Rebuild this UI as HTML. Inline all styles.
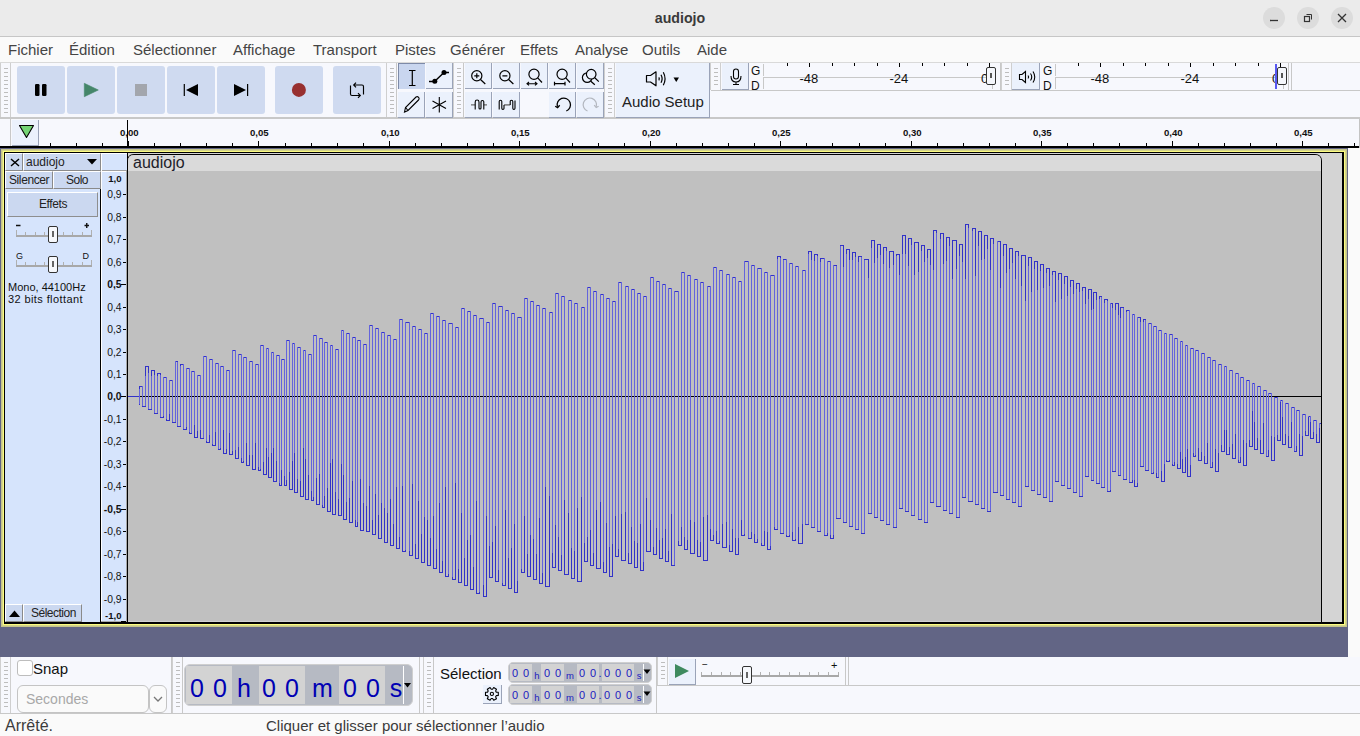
<!DOCTYPE html><html><head><meta charset="utf-8"><style>
*{margin:0;padding:0;box-sizing:border-box}
html,body{width:1360px;height:736px;overflow:hidden;background:#fafafa;font-family:"Liberation Sans",sans-serif}
div{position:absolute}
.t{white-space:nowrap}
svg{position:absolute;overflow:visible}
</style></head><body>
<div style="left:0px;top:0px;width:1360px;height:36px;background:#ebebeb"></div>
<div style="left:0px;top:36px;width:1360px;height:1px;background:#c6c6c6"></div>
<div class="t" style="left:0;top:10px;width:1360px;text-align:center;font-size:14.2px;line-height:16px;font-weight:bold;color:#3a3a3a">audiojo</div>
<div style="left:1263px;top:7px;width:22px;height:22px;background:#dcdcdc;border-radius:50%"></div>
<div style="left:1297px;top:7px;width:22px;height:22px;background:#dcdcdc;border-radius:50%"></div>
<div style="left:1331px;top:7px;width:22px;height:22px;background:#dcdcdc;border-radius:50%"></div>
<svg style="left:0;top:0" width="1360" height="36"><line x1="1270" y1="20.5" x2="1278" y2="20.5" stroke="#333" stroke-width="1.3"/><rect x="1304.5" y="16.5" width="5" height="5" fill="none" stroke="#333" stroke-width="1.2"/><polyline points="1306.5,14.5 1311.5,14.5 1311.5,19.5" fill="none" stroke="#333" stroke-width="1"/><path d="M1338 14 L1346 22 M1346 14 L1338 22" stroke="#333" stroke-width="1.3"/></svg>
<div style="left:0px;top:37px;width:1360px;height:25px;background:#fafafa"></div>
<div style="left:0px;top:62px;width:1360px;height:1px;background:#d9d9d9"></div>
<div class="t" style="left:8px;top:42px;font-size:15px;line-height:15px;color:#444;font-weight:normal;">Fichier</div>
<div class="t" style="left:69px;top:42px;font-size:15px;line-height:15px;color:#444;font-weight:normal;">Édition</div>
<div class="t" style="left:133px;top:42px;font-size:15px;line-height:15px;color:#444;font-weight:normal;">Sélectionner</div>
<div class="t" style="left:233px;top:42px;font-size:15px;line-height:15px;color:#444;font-weight:normal;">Affichage</div>
<div class="t" style="left:313px;top:42px;font-size:15px;line-height:15px;color:#444;font-weight:normal;">Transport</div>
<div class="t" style="left:395px;top:42px;font-size:15px;line-height:15px;color:#444;font-weight:normal;">Pistes</div>
<div class="t" style="left:450px;top:42px;font-size:15px;line-height:15px;color:#444;font-weight:normal;">Générer</div>
<div class="t" style="left:520px;top:42px;font-size:15px;line-height:15px;color:#444;font-weight:normal;">Effets</div>
<div class="t" style="left:575px;top:42px;font-size:15px;line-height:15px;color:#444;font-weight:normal;">Analyse</div>
<div class="t" style="left:642px;top:42px;font-size:15px;line-height:15px;color:#444;font-weight:normal;">Outils</div>
<div class="t" style="left:697px;top:42px;font-size:15px;line-height:15px;color:#444;font-weight:normal;">Aide</div>
<div style="left:0px;top:63px;width:1360px;height:55px;background:#f7f8fd"></div>
<div style="left:0px;top:117px;width:1360px;height:2px;background:#c8c8c8"></div>
<div style="left:0px;top:63px;width:1px;height:54px;background:#cfcfcf"></div>
<div style="left:10px;top:63px;width:1px;height:54px;background:#cfcfcf"></div>
<div style="left:4px;top:68px;width:4px;height:1px;background:#bdbdbd"></div>
<div style="left:4px;top:72px;width:4px;height:1px;background:#bdbdbd"></div>
<div style="left:4px;top:76px;width:4px;height:1px;background:#bdbdbd"></div>
<div style="left:4px;top:80px;width:4px;height:1px;background:#bdbdbd"></div>
<div style="left:4px;top:84px;width:4px;height:1px;background:#bdbdbd"></div>
<div style="left:4px;top:88px;width:4px;height:1px;background:#bdbdbd"></div>
<div style="left:4px;top:92px;width:4px;height:1px;background:#bdbdbd"></div>
<div style="left:4px;top:96px;width:4px;height:1px;background:#bdbdbd"></div>
<div style="left:4px;top:100px;width:4px;height:1px;background:#bdbdbd"></div>
<div style="left:4px;top:104px;width:4px;height:1px;background:#bdbdbd"></div>
<div style="left:4px;top:108px;width:4px;height:1px;background:#bdbdbd"></div>
<div style="left:4px;top:112px;width:4px;height:1px;background:#bdbdbd"></div>
<div style="left:17px;top:66px;width:48px;height:48px;background:#cfdaf0;border-radius:3px"></div>
<div style="left:67px;top:66px;width:48px;height:48px;background:#cfdaf0;border-radius:3px"></div>
<div style="left:117px;top:66px;width:48px;height:48px;background:#cfdaf0;border-radius:3px"></div>
<div style="left:167px;top:66px;width:48px;height:48px;background:#cfdaf0;border-radius:3px"></div>
<div style="left:217px;top:66px;width:48px;height:48px;background:#cfdaf0;border-radius:3px"></div>
<div style="left:275px;top:66px;width:48px;height:48px;background:#cfdaf0;border-radius:3px"></div>
<div style="left:333px;top:66px;width:48px;height:48px;background:#cfdaf0;border-radius:3px"></div>
<svg style="left:0;top:0" width="400" height="120"><rect x="35" y="84" width="4.5" height="12" rx="1.2" fill="#000"/><rect x="42" y="84" width="4.5" height="12" rx="1.2" fill="#000"/><path d="M84.3 83.3 L98.3 90 L84.3 96.7 Z" fill="#45866a" stroke="#45866a" stroke-width="0.6" stroke-linejoin="round"/><rect x="135" y="84" width="12" height="12" fill="#a3a6ad"/><rect x="183.7" y="84" width="1.2" height="12" fill="#000"/><path d="M186 90 L198 84 L198 96 Z" fill="#000"/><path d="M234 84 L246 90 L234 96 Z" fill="#000"/><rect x="247" y="84" width="1.2" height="12" fill="#000"/><circle cx="298.9" cy="89.9" r="7" fill="#983030"/><path d="M350.5 85.5 V94 Q350.5 95.5 352 95.5 H360.3 M358 93.2 L360.3 95.5 L358 97.8" fill="none" stroke="#000" stroke-width="1.15"/><path d="M363.5 94.5 V86.5 Q363.5 85 362 85 H353.7 M356 82.7 L353.7 85 L356 87.3" fill="none" stroke="#000" stroke-width="1.15"/></svg>
<div style="left:386px;top:63px;width:1px;height:54px;background:#c8c8c8"></div>
<div style="left:386px;top:63px;width:1px;height:54px;background:#cfcfcf"></div>
<div style="left:396px;top:63px;width:1px;height:54px;background:#cfcfcf"></div>
<div style="left:390px;top:68px;width:4px;height:1px;background:#bdbdbd"></div>
<div style="left:390px;top:72px;width:4px;height:1px;background:#bdbdbd"></div>
<div style="left:390px;top:76px;width:4px;height:1px;background:#bdbdbd"></div>
<div style="left:390px;top:80px;width:4px;height:1px;background:#bdbdbd"></div>
<div style="left:390px;top:84px;width:4px;height:1px;background:#bdbdbd"></div>
<div style="left:390px;top:88px;width:4px;height:1px;background:#bdbdbd"></div>
<div style="left:390px;top:92px;width:4px;height:1px;background:#bdbdbd"></div>
<div style="left:390px;top:96px;width:4px;height:1px;background:#bdbdbd"></div>
<div style="left:390px;top:100px;width:4px;height:1px;background:#bdbdbd"></div>
<div style="left:390px;top:104px;width:4px;height:1px;background:#bdbdbd"></div>
<div style="left:390px;top:108px;width:4px;height:1px;background:#bdbdbd"></div>
<div style="left:390px;top:112px;width:4px;height:1px;background:#bdbdbd"></div>
<div style="left:396px;top:63px;width:1px;height:54px;background:#c8c8c8"></div>
<div style="left:398px;top:63px;width:27px;height:26px;background:#c9d6ef;border-top:1px solid #7d8aa8;border-left:1px solid #7d8aa8"></div>
<div style="left:426px;top:63px;width:27px;height:26px;background:#ebf1fc;border-bottom:1px solid #9aa3b8;border-right:1px solid #9aa3b8"></div>
<div style="left:398px;top:92px;width:27px;height:26px;background:#ebf1fc;border-bottom:1px solid #9aa3b8;border-right:1px solid #9aa3b8"></div>
<div style="left:426px;top:92px;width:27px;height:26px;background:#ebf1fc;border-bottom:1px solid #9aa3b8;border-right:1px solid #9aa3b8"></div>
<div style="left:453px;top:63px;width:1px;height:54px;background:#c8c8c8"></div>
<div style="left:453px;top:63px;width:1px;height:54px;background:#cfcfcf"></div>
<div style="left:463px;top:63px;width:1px;height:54px;background:#cfcfcf"></div>
<div style="left:457px;top:68px;width:4px;height:1px;background:#bdbdbd"></div>
<div style="left:457px;top:72px;width:4px;height:1px;background:#bdbdbd"></div>
<div style="left:457px;top:76px;width:4px;height:1px;background:#bdbdbd"></div>
<div style="left:457px;top:80px;width:4px;height:1px;background:#bdbdbd"></div>
<div style="left:457px;top:84px;width:4px;height:1px;background:#bdbdbd"></div>
<div style="left:457px;top:88px;width:4px;height:1px;background:#bdbdbd"></div>
<div style="left:457px;top:92px;width:4px;height:1px;background:#bdbdbd"></div>
<div style="left:457px;top:96px;width:4px;height:1px;background:#bdbdbd"></div>
<div style="left:457px;top:100px;width:4px;height:1px;background:#bdbdbd"></div>
<div style="left:457px;top:104px;width:4px;height:1px;background:#bdbdbd"></div>
<div style="left:457px;top:108px;width:4px;height:1px;background:#bdbdbd"></div>
<div style="left:457px;top:112px;width:4px;height:1px;background:#bdbdbd"></div>
<div style="left:463px;top:63px;width:1px;height:54px;background:#c8c8c8"></div>
<div style="left:465px;top:63px;width:27px;height:26px;background:#ebf1fc;border-bottom:1px solid #9aa3b8;border-right:1px solid #9aa3b8"></div>
<div style="left:493px;top:63px;width:27px;height:26px;background:#ebf1fc;border-bottom:1px solid #9aa3b8;border-right:1px solid #9aa3b8"></div>
<div style="left:521px;top:63px;width:27px;height:26px;background:#ebf1fc;border-bottom:1px solid #9aa3b8;border-right:1px solid #9aa3b8"></div>
<div style="left:549px;top:63px;width:27px;height:26px;background:#ebf1fc;border-bottom:1px solid #9aa3b8;border-right:1px solid #9aa3b8"></div>
<div style="left:577px;top:63px;width:27px;height:26px;background:#ebf1fc;border-bottom:1px solid #9aa3b8;border-right:1px solid #9aa3b8"></div>
<div style="left:465px;top:92px;width:27px;height:26px;background:#ebf1fc;border-bottom:1px solid #9aa3b8;border-right:1px solid #9aa3b8"></div>
<div style="left:493px;top:92px;width:27px;height:26px;background:#ebf1fc;border-bottom:1px solid #9aa3b8;border-right:1px solid #9aa3b8"></div>
<div style="left:549px;top:92px;width:27px;height:26px;background:#ebf1fc;border-bottom:1px solid #9aa3b8;border-right:1px solid #9aa3b8"></div>
<div style="left:577px;top:92px;width:27px;height:26px;background:#ebf1fc;border-bottom:1px solid #9aa3b8;border-right:1px solid #9aa3b8"></div>
<div style="left:604px;top:63px;width:1px;height:54px;background:#c8c8c8"></div>
<div style="left:604px;top:63px;width:1px;height:54px;background:#cfcfcf"></div>
<div style="left:614px;top:63px;width:1px;height:54px;background:#cfcfcf"></div>
<div style="left:608px;top:68px;width:4px;height:1px;background:#bdbdbd"></div>
<div style="left:608px;top:72px;width:4px;height:1px;background:#bdbdbd"></div>
<div style="left:608px;top:76px;width:4px;height:1px;background:#bdbdbd"></div>
<div style="left:608px;top:80px;width:4px;height:1px;background:#bdbdbd"></div>
<div style="left:608px;top:84px;width:4px;height:1px;background:#bdbdbd"></div>
<div style="left:608px;top:88px;width:4px;height:1px;background:#bdbdbd"></div>
<div style="left:608px;top:92px;width:4px;height:1px;background:#bdbdbd"></div>
<div style="left:608px;top:96px;width:4px;height:1px;background:#bdbdbd"></div>
<div style="left:608px;top:100px;width:4px;height:1px;background:#bdbdbd"></div>
<div style="left:608px;top:104px;width:4px;height:1px;background:#bdbdbd"></div>
<div style="left:608px;top:108px;width:4px;height:1px;background:#bdbdbd"></div>
<div style="left:608px;top:112px;width:4px;height:1px;background:#bdbdbd"></div>
<div style="left:616px;top:63px;width:94px;height:55px;background:#ebf1fc;border-bottom:1px solid #9aa3b8;border-right:1px solid #9aa3b8"></div>
<div class="t" style="left:622px;top:94px;font-size:15px;line-height:15px;color:#222;font-weight:normal;">Audio Setup</div>
<svg style="left:0;top:0" width="720" height="120"><path d="M409 70.5 H415.5 M412.3 70.5 V85.5 M409 85.5 H415.5" stroke="#000" stroke-width="1.2" fill="none"/><path d="M429 81.5 H434.5 L444 72.5 H449" stroke="#000" stroke-width="1.35" fill="none"/><circle cx="434.8" cy="81.3" r="2.5" fill="#000"/><circle cx="444" cy="72.4" r="2.5" fill="#000"/><path d="M404.5 112 L405.5 107.5 L416 97 Q418 96 419 98 Q419.5 99 418.5 100 L408 110.5 Z M405.5 107.5 L408 110.5" stroke="#000" stroke-width="1.1" fill="none"/><path d="M439.3 97 V112.5 M432.5 101 L446 108.5 M432.5 108.5 L446 101" stroke="#000" stroke-width="1.1" fill="none"/><circle cx="476.8" cy="75.8" r="5.1" stroke="#000" stroke-width="1.2" fill="none"/><path d="M480.5 79.5 L485.3 84 M474.3 75.8 H479.3 M476.8 73.3 V78.3" stroke="#000" stroke-width="1.2"/><circle cx="504.9" cy="75.8" r="5.1" stroke="#000" stroke-width="1.2" fill="none"/><path d="M508.6 79.5 L513.4 84 M502.4 75.8 H507.4" stroke="#000" stroke-width="1.2"/><circle cx="534" cy="74.2" r="5.1" stroke="#000" stroke-width="1.2" fill="none"/><path d="M537.7 77.9 L542 82.5" stroke="#000" stroke-width="1.2"/><path d="M527 83.7 H537 M529 82 L527 83.7 L529 85.4 M535 82 L537 83.7 L535 85.4" stroke="#000" stroke-width="1.1" fill="none"/><circle cx="562.1" cy="74.2" r="5.1" stroke="#000" stroke-width="1.2" fill="none"/><path d="M565.8 77.9 L570 82.5" stroke="#000" stroke-width="1.2"/><path d="M554.5 83.7 H565 M554.5 81.8 V85.6 M565 81.8 V85.6" stroke="#000" stroke-width="1.2" fill="none"/><circle cx="587.2" cy="77.6" r="4.8" stroke="#000" stroke-width="1.2" fill="none"/><circle cx="591.2" cy="74.2" r="4.8" stroke="#000" stroke-width="1.2" fill="#ebf1fc"/><path d="M590.8 81.2 L594.8 84.8 M594.8 77.8 L598.8 81.6" stroke="#000" stroke-width="1.2"/><path d="M471 104.9 H475.2 M483.8 104.9 H487" stroke="#6e6e6e" stroke-width="1.4"/><path d="M475.2 109.6 V101.9 A1.9 1.9 0 0 1 479 101.9 V108 A1 1 0 0 0 481 108 V101.9 A1.4 1.4 0 0 1 483.8 101.9 V109.6" stroke="#000" stroke-width="1.1" fill="none"/><path d="M504 104.9 H510.2" stroke="#6e6e6e" stroke-width="1.4"/><path d="M499.2 109.6 V101.6 A1.3 1.3 0 0 1 501.8 101.6 V108.3 A1.1 1.1 0 0 0 504 108.3 V104.9 M510.2 104.9 V101.6 A1.3 1.3 0 0 1 512.8 101.6 V108.3 A1.1 1.1 0 0 0 515 108.3 V100.5" stroke="#000" stroke-width="1.1" fill="none"/><path d="M566.3 111 A6.7 6.7 0 1 0 557.4 106.8" stroke="#000" stroke-width="1.3" fill="none"/><path d="M555.2 106.2 L557.6 107.6 L559.7 105.2" stroke="#000" stroke-width="1.3" fill="none"/><path d="M587.5 111 A6.7 6.7 0 1 1 596.2 106.8" stroke="#b3b7bf" stroke-width="1.2" fill="none"/><path d="M594.2 105.2 L596.2 107.6 L598.6 106.2" stroke="#b3b7bf" stroke-width="1.2" fill="none"/><path d="M646.5 75.5 H650.5 L656 71.8 V85.8 L650.5 82 H646.5 Z" stroke="#000" stroke-width="1.2" fill="none" stroke-linejoin="round"/><path d="M658.8 77.3 Q659.8 78.8 658.8 80.3 M661 74.8 Q663.2 78.8 661 82.8 M663.3 72.3 Q666.8 78.8 663.3 85.3" stroke="#000" stroke-width="1.2" fill="none"/><path d="M673.5 77.5 H679 L676.25 82 Z" fill="#000"/></svg>
<div style="left:710px;top:63px;width:1px;height:27px;background:#c8c8c8"></div>
<div style="left:711px;top:90px;width:649px;height:1px;background:#c8c8c8"></div>
<div style="left:710px;top:63px;width:1px;height:27px;background:#cfcfcf"></div>
<div style="left:720px;top:63px;width:1px;height:27px;background:#cfcfcf"></div>
<div style="left:714px;top:68px;width:4px;height:1px;background:#bdbdbd"></div>
<div style="left:714px;top:72px;width:4px;height:1px;background:#bdbdbd"></div>
<div style="left:714px;top:76px;width:4px;height:1px;background:#bdbdbd"></div>
<div style="left:714px;top:80px;width:4px;height:1px;background:#bdbdbd"></div>
<div style="left:714px;top:84px;width:4px;height:1px;background:#bdbdbd"></div>
<div style="left:722px;top:63px;width:27px;height:27px;background:#ebf1fc;border-bottom:1px solid #9aa3b8;border-right:1px solid #9aa3b8"></div>
<div style="left:1000px;top:63px;width:1px;height:27px;background:#c8c8c8"></div>
<div style="left:1001px;top:63px;width:1px;height:27px;background:#cfcfcf"></div>
<div style="left:1011px;top:63px;width:1px;height:27px;background:#cfcfcf"></div>
<div style="left:1005px;top:68px;width:4px;height:1px;background:#bdbdbd"></div>
<div style="left:1005px;top:72px;width:4px;height:1px;background:#bdbdbd"></div>
<div style="left:1005px;top:76px;width:4px;height:1px;background:#bdbdbd"></div>
<div style="left:1005px;top:80px;width:4px;height:1px;background:#bdbdbd"></div>
<div style="left:1005px;top:84px;width:4px;height:1px;background:#bdbdbd"></div>
<div style="left:1012px;top:63px;width:28px;height:27px;background:#ebf1fc;border-bottom:1px solid #9aa3b8;border-right:1px solid #9aa3b8"></div>
<div style="left:1288px;top:63px;width:1px;height:27px;background:#c8c8c8"></div>
<div style="left:1291px;top:63px;width:1px;height:27px;background:#c8c8c8"></div>
<div class="t" style="left:751px;top:65px;font-size:12px;line-height:12px;color:#111;font-weight:normal;">G</div>
<div class="t" style="left:751px;top:79.5px;font-size:12px;line-height:12px;color:#111;font-weight:normal;">D</div>
<div style="left:763px;top:64px;width:1px;height:12px;background:#c8c8c8"></div>
<div style="left:763px;top:78px;width:1px;height:11px;background:#c8c8c8"></div>
<div style="left:763px;top:77px;width:232px;height:1px;background:#c8c8c8"></div>
<div style="left:787px;top:63px;width:1px;height:3px;background:#000"></div>
<div style="left:809px;top:63px;width:1px;height:4px;background:#000"></div>
<div style="left:832px;top:63px;width:1px;height:3px;background:#000"></div>
<div style="left:854px;top:63px;width:1px;height:3px;background:#000"></div>
<div style="left:877px;top:63px;width:1px;height:3px;background:#000"></div>
<div style="left:899px;top:63px;width:1px;height:4px;background:#000"></div>
<div style="left:922px;top:63px;width:1px;height:3px;background:#000"></div>
<div style="left:944px;top:63px;width:1px;height:3px;background:#000"></div>
<div style="left:967px;top:63px;width:1px;height:3px;background:#000"></div>
<div style="left:989px;top:63px;width:1px;height:4px;background:#000"></div>
<div class="t" style="left:799.5px;top:71.5px;font-size:13px;line-height:13px;color:#111;font-weight:normal;">-48</div>
<div class="t" style="left:889.5px;top:71.5px;font-size:13px;line-height:13px;color:#111;font-weight:normal;">-24</div>
<div class="t" style="left:981px;top:71.5px;font-size:13px;line-height:13px;color:#111;font-weight:normal;">0</div>
<div style="left:986px;top:67px;width:10px;height:18px;background:#f4f6fb;border:1px solid #333;border-radius:2px"></div>
<div style="left:990px;top:73px;width:1.5px;height:5px;background:#555"></div>
<div style="left:992px;top:85px;width:1px;height:4px;background:#c8c8c8"></div>
<div class="t" style="left:1043px;top:65px;font-size:12px;line-height:12px;color:#111;font-weight:normal;">G</div>
<div class="t" style="left:1043px;top:79.5px;font-size:12px;line-height:12px;color:#111;font-weight:normal;">D</div>
<div style="left:1055px;top:64px;width:1px;height:12px;background:#c8c8c8"></div>
<div style="left:1055px;top:78px;width:1px;height:11px;background:#c8c8c8"></div>
<div style="left:1055px;top:77px;width:232px;height:1px;background:#c8c8c8"></div>
<div style="left:1078px;top:63px;width:1px;height:3px;background:#000"></div>
<div style="left:1100px;top:63px;width:1px;height:4px;background:#000"></div>
<div style="left:1123px;top:63px;width:1px;height:3px;background:#000"></div>
<div style="left:1145px;top:63px;width:1px;height:3px;background:#000"></div>
<div style="left:1168px;top:63px;width:1px;height:3px;background:#000"></div>
<div style="left:1190px;top:63px;width:1px;height:4px;background:#000"></div>
<div style="left:1213px;top:63px;width:1px;height:3px;background:#000"></div>
<div style="left:1235px;top:63px;width:1px;height:3px;background:#000"></div>
<div style="left:1258px;top:63px;width:1px;height:3px;background:#000"></div>
<div style="left:1280px;top:63px;width:1px;height:4px;background:#000"></div>
<div class="t" style="left:1090.5px;top:71.5px;font-size:13px;line-height:13px;color:#111;font-weight:normal;">-48</div>
<div class="t" style="left:1180.5px;top:71.5px;font-size:13px;line-height:13px;color:#111;font-weight:normal;">-24</div>
<div class="t" style="left:1272px;top:71.5px;font-size:13px;line-height:13px;color:#111;font-weight:normal;">0</div>
<div style="left:1275px;top:64px;width:2px;height:25px;background:#5858f0"></div>
<div style="left:1277px;top:67px;width:10px;height:18px;background:#f4f6fb;border:1px solid #333;border-radius:2px"></div>
<div style="left:1281px;top:73px;width:1.5px;height:5px;background:#555"></div>
<div style="left:1283px;top:85px;width:1px;height:4px;background:#c8c8c8"></div>
<svg style="left:0;top:0" width="1100" height="100"><rect x="733.5" y="69" width="5" height="10" rx="2.5" stroke="#000" stroke-width="1.1" fill="none"/><path d="M731 76 Q731 82 736 82 Q741 82 741 76 M736 82 V84.5 M733 84.5 H739" stroke="#000" stroke-width="1.1" fill="none"/><path d="M1019.5 74.5 H1022 L1025.5 71.5 V82.5 L1022 79.5 H1019.5 Z" stroke="#000" stroke-width="1.1" fill="none"/><path d="M1028 75.5 Q1029.3 77 1028 78.5 M1030.5 73.5 Q1033 77 1030.5 80.5 M1033 71.5 Q1036.5 77 1033 82.5" stroke="#000" stroke-width="1.1" fill="none"/></svg>
<div style="left:0px;top:119px;width:1360px;height:27px;background:#f7f8fd"></div>
<div style="left:0px;top:146px;width:1359px;height:2px;background:#000"></div>
<div style="left:10px;top:117px;width:1px;height:29px;background:#c8c8c8"></div>
<div style="left:12px;top:120px;width:27px;height:26px;background:#ebf1fc;border-right:1px solid #9aa3b8;border-bottom:1px solid #9aa3b8"></div>
<svg style="left:0;top:0" width="40" height="150"><path d="M19.5 125.5 H33.5 L26.5 137.5 Z" fill="#74d474" stroke="#000" stroke-width="1.1" stroke-linejoin="round"/></svg>
<div style="left:1359px;top:119px;width:1px;height:29px;background:#c4c4c4"></div>
<div style="left:50px;top:143px;width:1px;height:3px;background:#000"></div><div style="left:76px;top:143px;width:1px;height:3px;background:#000"></div><div style="left:102px;top:143px;width:1px;height:3px;background:#000"></div><div style="left:128px;top:141px;width:1px;height:5px;background:#000"></div><div class="t" style="left:120px;top:127.5px;font-size:9.6px;line-height:10px;font-weight:bold;color:#111">0,00</div><div style="left:154px;top:143px;width:1px;height:3px;background:#000"></div><div style="left:180px;top:143px;width:1px;height:3px;background:#000"></div><div style="left:206px;top:143px;width:1px;height:3px;background:#000"></div><div style="left:232px;top:143px;width:1px;height:3px;background:#000"></div><div style="left:258px;top:141px;width:1px;height:5px;background:#000"></div><div class="t" style="left:250px;top:127.5px;font-size:9.6px;line-height:10px;font-weight:bold;color:#111">0,05</div><div style="left:285px;top:143px;width:1px;height:3px;background:#000"></div><div style="left:311px;top:143px;width:1px;height:3px;background:#000"></div><div style="left:337px;top:143px;width:1px;height:3px;background:#000"></div><div style="left:363px;top:143px;width:1px;height:3px;background:#000"></div><div style="left:389px;top:141px;width:1px;height:5px;background:#000"></div><div class="t" style="left:381px;top:127.5px;font-size:9.6px;line-height:10px;font-weight:bold;color:#111">0,10</div><div style="left:415px;top:143px;width:1px;height:3px;background:#000"></div><div style="left:441px;top:143px;width:1px;height:3px;background:#000"></div><div style="left:467px;top:143px;width:1px;height:3px;background:#000"></div><div style="left:493px;top:143px;width:1px;height:3px;background:#000"></div><div style="left:519px;top:141px;width:1px;height:5px;background:#000"></div><div class="t" style="left:511px;top:127.5px;font-size:9.6px;line-height:10px;font-weight:bold;color:#111">0,15</div><div style="left:545px;top:143px;width:1px;height:3px;background:#000"></div><div style="left:572px;top:143px;width:1px;height:3px;background:#000"></div><div style="left:598px;top:143px;width:1px;height:3px;background:#000"></div><div style="left:624px;top:143px;width:1px;height:3px;background:#000"></div><div style="left:650px;top:141px;width:1px;height:5px;background:#000"></div><div class="t" style="left:642px;top:127.5px;font-size:9.6px;line-height:10px;font-weight:bold;color:#111">0,20</div><div style="left:676px;top:143px;width:1px;height:3px;background:#000"></div><div style="left:702px;top:143px;width:1px;height:3px;background:#000"></div><div style="left:728px;top:143px;width:1px;height:3px;background:#000"></div><div style="left:754px;top:143px;width:1px;height:3px;background:#000"></div><div style="left:780px;top:141px;width:1px;height:5px;background:#000"></div><div class="t" style="left:772px;top:127.5px;font-size:9.6px;line-height:10px;font-weight:bold;color:#111">0,25</div><div style="left:806px;top:143px;width:1px;height:3px;background:#000"></div><div style="left:832px;top:143px;width:1px;height:3px;background:#000"></div><div style="left:859px;top:143px;width:1px;height:3px;background:#000"></div><div style="left:885px;top:143px;width:1px;height:3px;background:#000"></div><div style="left:911px;top:141px;width:1px;height:5px;background:#000"></div><div class="t" style="left:903px;top:127.5px;font-size:9.6px;line-height:10px;font-weight:bold;color:#111">0,30</div><div style="left:937px;top:143px;width:1px;height:3px;background:#000"></div><div style="left:963px;top:143px;width:1px;height:3px;background:#000"></div><div style="left:989px;top:143px;width:1px;height:3px;background:#000"></div><div style="left:1015px;top:143px;width:1px;height:3px;background:#000"></div><div style="left:1041px;top:141px;width:1px;height:5px;background:#000"></div><div class="t" style="left:1033px;top:127.5px;font-size:9.6px;line-height:10px;font-weight:bold;color:#111">0,35</div><div style="left:1067px;top:143px;width:1px;height:3px;background:#000"></div><div style="left:1093px;top:143px;width:1px;height:3px;background:#000"></div><div style="left:1119px;top:143px;width:1px;height:3px;background:#000"></div><div style="left:1146px;top:143px;width:1px;height:3px;background:#000"></div><div style="left:1172px;top:141px;width:1px;height:5px;background:#000"></div><div class="t" style="left:1164px;top:127.5px;font-size:9.6px;line-height:10px;font-weight:bold;color:#111">0,40</div><div style="left:1198px;top:143px;width:1px;height:3px;background:#000"></div><div style="left:1224px;top:143px;width:1px;height:3px;background:#000"></div><div style="left:1250px;top:143px;width:1px;height:3px;background:#000"></div><div style="left:1276px;top:143px;width:1px;height:3px;background:#000"></div><div style="left:1302px;top:141px;width:1px;height:5px;background:#000"></div><div class="t" style="left:1294px;top:127.5px;font-size:9.6px;line-height:10px;font-weight:bold;color:#111">0,45</div><div style="left:1328px;top:143px;width:1px;height:3px;background:#000"></div><div style="left:1354px;top:143px;width:1px;height:3px;background:#000"></div>
<div style="left:127px;top:120px;width:1px;height:26px;background:#000"></div>
<div style="left:128px;top:141px;width:1px;height:5px;background:#000"></div>
<div style="left:0px;top:148px;width:1348px;height:509px;background:#626585"></div>
<div style="left:1348px;top:148px;width:12px;height:509px;background:#fafafa"></div>
<div style="left:1px;top:149px;width:1346px;height:478px;background:#c4c48c"></div>
<div style="left:2px;top:150px;width:1344px;height:476px;background:#d4d48a"></div>
<div style="left:3px;top:151px;width:1342px;height:474px;background:#fcfc80"></div>
<div style="left:4px;top:152px;width:1340px;height:472px;background:#000"></div>
<div style="left:5px;top:153px;width:1337px;height:469px;background:#d4d4d4"></div>
<div style="left:5px;top:153px;width:96px;height:469px;background:#d6e4fc"></div>
<div style="left:100px;top:189px;width:1px;height:433px;background:#000"></div>
<div style="left:5px;top:153px;width:18px;height:18px;background:#cbd8f0;border-right:1px solid #8a8a8a;border-bottom:1px solid #8a8a8a;border-top:1px solid #fff;border-left:1px solid #fff"></div>
<div style="left:23px;top:153px;width:78px;height:18px;background:#cbd8f0;border-right:1px solid #8a8a8a;border-bottom:1px solid #8a8a8a;border-top:1px solid #fff;border-left:1px solid #fff"></div>
<div style="left:5px;top:171px;width:48px;height:18px;background:#cbd8f0;border-right:1px solid #8a8a8a;border-bottom:1px solid #8a8a8a;border-top:1px solid #fff;border-left:1px solid #fff"></div>
<div style="left:53px;top:171px;width:48px;height:18px;background:#cbd8f0;border-right:1px solid #8a8a8a;border-bottom:1px solid #8a8a8a;border-top:1px solid #fff;border-left:1px solid #fff"></div>
<svg style="left:0;top:0" width="30" height="170"><path d="M11 159 L19 166 M19 159 L11 166" stroke="#000" stroke-width="1.45"/></svg>
<div class="t" style="left:26px;top:156px;font-size:12px;line-height:12px;color:#222;font-weight:normal;">audiojo</div>
<svg style="left:0;top:0" width="110" height="170"><path d="M87 159 H97 L92 164.5 Z" fill="#000"/></svg>
<div class="t" style="left:9px;top:174px;font-size:12px;line-height:12px;color:#222;font-weight:normal;letter-spacing:-0.4px">Silencer</div>
<div class="t" style="left:66px;top:174px;font-size:12px;line-height:12px;color:#222;font-weight:normal;letter-spacing:-0.5px">Solo</div>
<div style="left:7px;top:192px;width:91px;height:25px;background:#cbd8f0;border:1px solid #8e8e8e;border-top-color:#fff;border-left-color:#fff"></div>
<div class="t" style="left:39px;top:198px;font-size:12px;line-height:12px;color:#222;font-weight:normal;letter-spacing:-0.4px">Effets</div>
<div style="left:16px;top:235px;width:76px;height:2px;background:#a8a8a8"></div>
<div style="left:16px;top:230px;width:1px;height:5px;background:#b0b0b0"></div>
<div style="left:25px;top:232px;width:1px;height:3px;background:#b0b0b0"></div>
<div style="left:35px;top:232px;width:1px;height:3px;background:#b0b0b0"></div>
<div style="left:44px;top:232px;width:1px;height:3px;background:#b0b0b0"></div>
<div style="left:54px;top:232px;width:1px;height:3px;background:#b0b0b0"></div>
<div style="left:63px;top:232px;width:1px;height:3px;background:#b0b0b0"></div>
<div style="left:72px;top:232px;width:1px;height:3px;background:#b0b0b0"></div>
<div style="left:82px;top:232px;width:1px;height:3px;background:#b0b0b0"></div>
<div style="left:91px;top:230px;width:1px;height:5px;background:#b0b0b0"></div>
<svg style="left:0;top:0" width="100" height="300"><path d="M16 225.5 H20.5 M84.5 225.5 H89 M86.75 223 V228" stroke="#111" stroke-width="1.4"/></svg>
<div style="left:48px;top:226px;width:10px;height:17px;background:#f6f8fc;border:1px solid #333;border-radius:2px"></div>
<div style="left:52px;top:231px;width:2px;height:6px;background:#666"></div>
<div style="left:16px;top:265px;width:76px;height:2px;background:#a8a8a8"></div>
<div style="left:16px;top:260px;width:1px;height:5px;background:#b0b0b0"></div>
<div style="left:25px;top:262px;width:1px;height:3px;background:#b0b0b0"></div>
<div style="left:35px;top:262px;width:1px;height:3px;background:#b0b0b0"></div>
<div style="left:44px;top:262px;width:1px;height:3px;background:#b0b0b0"></div>
<div style="left:54px;top:262px;width:1px;height:3px;background:#b0b0b0"></div>
<div style="left:63px;top:262px;width:1px;height:3px;background:#b0b0b0"></div>
<div style="left:72px;top:262px;width:1px;height:3px;background:#b0b0b0"></div>
<div style="left:82px;top:262px;width:1px;height:3px;background:#b0b0b0"></div>
<div style="left:91px;top:260px;width:1px;height:5px;background:#b0b0b0"></div>
<div class="t" style="left:16px;top:251.5px;font-size:9px;line-height:9px;color:#111;font-weight:normal;">G</div>
<div class="t" style="left:82.5px;top:251.5px;font-size:9px;line-height:9px;color:#111;font-weight:normal;">D</div>
<div style="left:48px;top:256px;width:10px;height:17px;background:#f6f8fc;border:1px solid #333;border-radius:2px"></div>
<div style="left:52px;top:261px;width:2px;height:6px;background:#666"></div>
<div class="t" style="left:8px;top:282px;font-size:11px;line-height:11px;color:#111;font-weight:normal;">Mono, 44100Hz</div>
<div class="t" style="left:8px;top:294px;font-size:11px;line-height:11px;color:#111;font-weight:normal;letter-spacing:0.4px">32 bits flottant</div>
<div style="left:5px;top:604px;width:18px;height:18px;background:#cbd8f0;border-right:1px solid #8a8a8a;border-bottom:1px solid #8a8a8a;border-top:1px solid #fff;border-left:1px solid #fff"></div>
<svg style="left:0;top:0" width="30" height="630"><path d="M9 617 H20 L14.5 610.5 Z" fill="#000"/></svg>
<div style="left:23px;top:604px;width:59px;height:18px;background:#cbd8f0;border-right:1px solid #8a8a8a;border-bottom:1px solid #8a8a8a;border-top:1px solid #fff;border-left:1px solid #fff"></div>
<div class="t" style="left:31px;top:607px;font-size:12px;line-height:12px;color:#222;font-weight:normal;letter-spacing:-0.5px">Sélection</div>
<div style="left:101px;top:153px;width:26px;height:469px;background:#d6e4fc"></div>
<div style="left:101px;top:170px;width:26px;height:1px;background:#a0a0a0"></div>
<div style="left:101px;top:153px;width:26px;height:1px;background:#fff"></div>
<div style="left:101px;top:171px;width:26px;height:1px;background:#fff"></div>
<div style="left:101px;top:153px;width:1px;height:469px;background:#fff"></div>
<div style="left:126px;top:171px;width:1px;height:451px;background:#a8a8a8"></div>
<div style="left:101px;top:621px;width:26px;height:1px;background:#a8a8a8"></div>
<div style="left:127px;top:153px;width:1px;height:469px;background:#000"></div>
<div class="t" style="left:94px;top:609.5px;width:27.5px;text-align:right;font-size:9.6px;line-height:11px;font-weight:bold;color:#111">-1,0</div><div style="left:121px;top:621px;width:5px;height:1px;background:#000"></div><div style="left:123px;top:599px;width:3px;height:1px;background:#000"></div><div class="t" style="left:94px;top:593.5px;width:27.5px;text-align:right;font-size:10.3px;line-height:11px;font-weight:normal;color:#111">-0,9</div><div style="left:123px;top:576px;width:3px;height:1px;background:#000"></div><div class="t" style="left:94px;top:570.5px;width:27.5px;text-align:right;font-size:10.3px;line-height:11px;font-weight:normal;color:#111">-0,8</div><div style="left:123px;top:554px;width:3px;height:1px;background:#000"></div><div class="t" style="left:94px;top:548.5px;width:27.5px;text-align:right;font-size:10.3px;line-height:11px;font-weight:normal;color:#111">-0,7</div><div style="left:123px;top:531px;width:3px;height:1px;background:#000"></div><div class="t" style="left:94px;top:525.5px;width:27.5px;text-align:right;font-size:10.3px;line-height:11px;font-weight:normal;color:#111">-0,6</div><div style="left:121px;top:509px;width:5px;height:1px;background:#000"></div><div class="t" style="left:94px;top:503.5px;width:27.5px;text-align:right;font-size:10.3px;line-height:11px;font-weight:bold;color:#111">-0,5</div><div style="left:123px;top:486px;width:3px;height:1px;background:#000"></div><div class="t" style="left:94px;top:480.5px;width:27.5px;text-align:right;font-size:10.3px;line-height:11px;font-weight:normal;color:#111">-0,4</div><div style="left:123px;top:464px;width:3px;height:1px;background:#000"></div><div class="t" style="left:94px;top:458.5px;width:27.5px;text-align:right;font-size:10.3px;line-height:11px;font-weight:normal;color:#111">-0,3</div><div style="left:123px;top:441px;width:3px;height:1px;background:#000"></div><div class="t" style="left:94px;top:435.5px;width:27.5px;text-align:right;font-size:10.3px;line-height:11px;font-weight:normal;color:#111">-0,2</div><div style="left:123px;top:419px;width:3px;height:1px;background:#000"></div><div class="t" style="left:94px;top:413.5px;width:27.5px;text-align:right;font-size:10.3px;line-height:11px;font-weight:normal;color:#111">-0,1</div><div style="left:121px;top:396px;width:5px;height:1px;background:#000"></div><div class="t" style="left:94px;top:390.5px;width:27.5px;text-align:right;font-size:10.3px;line-height:11px;font-weight:bold;color:#111">0,0</div><div style="left:123px;top:374px;width:3px;height:1px;background:#000"></div><div class="t" style="left:94px;top:368.5px;width:27.5px;text-align:right;font-size:10.3px;line-height:11px;font-weight:normal;color:#111">0,1</div><div style="left:123px;top:352px;width:3px;height:1px;background:#000"></div><div class="t" style="left:94px;top:346.5px;width:27.5px;text-align:right;font-size:10.3px;line-height:11px;font-weight:normal;color:#111">0,2</div><div style="left:123px;top:329px;width:3px;height:1px;background:#000"></div><div class="t" style="left:94px;top:323.5px;width:27.5px;text-align:right;font-size:10.3px;line-height:11px;font-weight:normal;color:#111">0,3</div><div style="left:123px;top:307px;width:3px;height:1px;background:#000"></div><div class="t" style="left:94px;top:301.5px;width:27.5px;text-align:right;font-size:10.3px;line-height:11px;font-weight:normal;color:#111">0,4</div><div style="left:121px;top:284px;width:5px;height:1px;background:#000"></div><div class="t" style="left:94px;top:278.5px;width:27.5px;text-align:right;font-size:10.3px;line-height:11px;font-weight:bold;color:#111">0,5</div><div style="left:123px;top:262px;width:3px;height:1px;background:#000"></div><div class="t" style="left:94px;top:256.5px;width:27.5px;text-align:right;font-size:10.3px;line-height:11px;font-weight:normal;color:#111">0,6</div><div style="left:123px;top:239px;width:3px;height:1px;background:#000"></div><div class="t" style="left:94px;top:233.5px;width:27.5px;text-align:right;font-size:10.3px;line-height:11px;font-weight:normal;color:#111">0,7</div><div style="left:123px;top:217px;width:3px;height:1px;background:#000"></div><div class="t" style="left:94px;top:211.5px;width:27.5px;text-align:right;font-size:10.3px;line-height:11px;font-weight:normal;color:#111">0,8</div><div style="left:123px;top:194px;width:3px;height:1px;background:#000"></div><div class="t" style="left:94px;top:188.5px;width:27.5px;text-align:right;font-size:10.3px;line-height:11px;font-weight:normal;color:#111">0,9</div><div class="t" style="left:94px;top:173px;width:27.5px;text-align:right;font-size:9.6px;line-height:11px;font-weight:bold;color:#111">1,0</div>
<svg style="left:0;top:0" width="1360" height="640"><path d="M127.5 621 V161 Q127.5 154.5 134 154.5 H1315 Q1321.5 154.5 1321.5 161 V621" fill="#c0c0c0" stroke="#000" stroke-width="1"/><path d="M128 171 V161 Q128 155 134 155 H1315 Q1321 155 1321 161 V171 Z" fill="#dadada"/></svg>
<div class="t" style="left:133px;top:154.7px;font-size:16px;line-height:16px;color:#1e1e2a;font-weight:normal;">audiojo</div>
<div style="left:128px;top:396px;width:1193px;height:1px;background:#000"></div>
<div style="left:1321px;top:620px;width:1px;height:2px;background:#000"></div>
<div style="left:128px;top:621px;width:1193px;height:1px;background:#d0d0d0"></div>
<svg style="left:0;top:0" width="1360" height="640"><path d="M128.5 396V397M129.5 396V397M130.5 396V397M131.5 396V397M132.5 396V397M133.5 396V397M134.5 396V397M135.5 396V397M136.5 396V397M137.5 396V397M138.5 396V397M139.5 386V405M140.5 386V387M141.5 386V387M142.5 386V407M143.5 406V407M144.5 406V407M145.5 366V407M146.5 366V367M147.5 366V367M148.5 366V410M149.5 409V410M150.5 409V410M151.5 370V410M152.5 370V371M153.5 370V371M154.5 370V414M155.5 413V414M156.5 413V414M157.5 373V414M158.5 373V374M159.5 373V374M160.5 373V418M161.5 417V418M162.5 417V418M163.5 377V418M164.5 377V378M165.5 377V378M166.5 377V421M167.5 420V421M168.5 420V421M169.5 380V421M170.5 380V381M171.5 380V381M172.5 380V423M173.5 422V423M174.5 422V423M175.5 361V423M176.5 361V362M177.5 361V427M178.5 426V427M179.5 426V427M180.5 364V427M181.5 364V365M182.5 364V365M183.5 364V430M184.5 429V430M185.5 429V430M186.5 368V430M187.5 368V369M188.5 368V369M189.5 368V434M190.5 433V434M191.5 371V434M192.5 371V372M193.5 371V372M194.5 371V438M195.5 437V438M196.5 437V438M197.5 375V438M198.5 375V376M199.5 375V376M200.5 375V439M201.5 438V439M202.5 438V439M203.5 356V439M204.5 356V357M205.5 356V357M206.5 356V443M207.5 442V443M208.5 442V443M209.5 359V443M210.5 359V360M211.5 359V360M212.5 359V446M213.5 445V446M214.5 445V446M215.5 363V446M216.5 363V364M217.5 363V364M218.5 363V450M219.5 449V450M220.5 366V450M221.5 366V367M222.5 366V367M223.5 366V454M224.5 453V454M225.5 453V454M226.5 370V454M227.5 370V371M228.5 370V371M229.5 370V455M230.5 454V455M231.5 454V455M232.5 350V455M233.5 350V351M234.5 350V351M235.5 350V459M236.5 458V459M237.5 458V459M238.5 354V459M239.5 354V355M240.5 354V355M241.5 354V463M242.5 462V463M243.5 357V463M244.5 357V358M245.5 357V358M246.5 357V466M247.5 465V466M248.5 465V466M249.5 361V466M250.5 361V362M251.5 361V362M252.5 361V470M253.5 469V470M254.5 469V470M255.5 364V470M256.5 364V365M257.5 364V365M258.5 364V471M259.5 470V471M260.5 345V471M261.5 345V346M262.5 345V346M263.5 345V475M264.5 474V475M265.5 474V475M266.5 348V475M267.5 348V349M268.5 348V478M269.5 477V478M270.5 477V478M271.5 352V478M272.5 352V353M273.5 352V482M274.5 481V482M275.5 481V482M276.5 355V482M277.5 355V356M278.5 355V356M279.5 355V486M280.5 485V486M281.5 359V486M282.5 359V360M283.5 359V360M284.5 359V486M285.5 485V486M286.5 340V486M287.5 340V341M288.5 340V341M289.5 340V490M290.5 489V490M291.5 489V490M292.5 343V490M293.5 343V344M294.5 343V493M295.5 492V493M296.5 492V493M297.5 347V493M298.5 347V348M299.5 347V348M300.5 347V497M301.5 496V497M302.5 496V497M303.5 350V497M304.5 350V351M305.5 350V500M306.5 499V500M307.5 499V500M308.5 354V500M309.5 354V355M310.5 354V355M311.5 354V501M312.5 500V501M313.5 335V501M314.5 335V336M315.5 335V336M316.5 335V505M317.5 504V505M318.5 504V505M319.5 338V505M320.5 338V339M321.5 338V339M322.5 338V508M323.5 507V508M324.5 342V508M325.5 342V343M326.5 342V343M327.5 342V512M328.5 511V512M329.5 511V512M330.5 345V512M331.5 345V346M332.5 345V515M333.5 514V515M334.5 514V515M335.5 349V515M336.5 349V350M337.5 349V350M338.5 349V516M339.5 515V516M340.5 515V516M341.5 330V516M342.5 330V331M343.5 330V520M344.5 519V520M345.5 519V520M346.5 333V520M347.5 333V334M348.5 333V334M349.5 333V523M350.5 522V523M351.5 522V523M352.5 337V523M353.5 337V338M354.5 337V338M355.5 337V527M356.5 526V527M357.5 340V527M358.5 340V341M359.5 340V341M360.5 340V531M361.5 530V531M362.5 530V531M363.5 344V531M364.5 344V345M365.5 344V345M366.5 344V532M367.5 531V532M368.5 531V532M369.5 325V532M370.5 325V326M371.5 325V326M372.5 325V535M373.5 534V535M374.5 534V535M375.5 328V535M376.5 328V329M377.5 328V329M378.5 328V539M379.5 538V539M380.5 538V539M381.5 332V539M382.5 332V333M383.5 332V333M384.5 332V543M385.5 542V543M386.5 542V543M387.5 335V543M388.5 335V336M389.5 335V336M390.5 335V546M391.5 545V546M392.5 545V546M393.5 339V546M394.5 339V340M395.5 339V340M396.5 339V549M397.5 548V549M398.5 548V549M399.5 319V549M400.5 319V320M401.5 319V320M402.5 319V552M403.5 551V552M404.5 551V552M405.5 322V552M406.5 322V323M407.5 322V323M408.5 322V323M409.5 322V556M410.5 555V556M411.5 555V556M412.5 326V556M413.5 326V327M414.5 326V327M415.5 326V559M416.5 558V559M417.5 558V559M418.5 329V559M419.5 329V330M420.5 329V330M421.5 329V563M422.5 562V563M423.5 562V563M424.5 333V563M425.5 333V334M426.5 333V334M427.5 333V566M428.5 565V566M429.5 565V566M430.5 313V566M431.5 313V314M432.5 313V314M433.5 313V569M434.5 568V569M435.5 568V569M436.5 316V569M437.5 316V317M438.5 316V317M439.5 316V573M440.5 572V573M441.5 572V573M442.5 320V573M443.5 320V321M444.5 320V321M445.5 320V577M446.5 576V577M447.5 576V577M448.5 323V577M449.5 323V324M450.5 323V324M451.5 323V324M452.5 323V580M453.5 579V580M454.5 579V580M455.5 327V580M456.5 327V328M457.5 327V328M458.5 327V583M459.5 582V583M460.5 582V583M461.5 308V583M462.5 308V309M463.5 308V309M464.5 308V586M465.5 585V586M466.5 585V586M467.5 311V586M468.5 311V312M469.5 311V312M470.5 311V590M471.5 589V590M472.5 589V590M473.5 315V590M474.5 315V316M475.5 315V316M476.5 315V594M477.5 593V594M478.5 593V594M479.5 318V594M480.5 318V319M481.5 318V319M482.5 318V319M483.5 318V597M484.5 596V597M485.5 596V597M486.5 322V597M487.5 322V323M488.5 322V323M489.5 322V578M490.5 577V578M491.5 577V578M492.5 303V578M493.5 303V304M494.5 303V304M495.5 303V582M496.5 581V582M497.5 581V582M498.5 306V582M499.5 306V307M500.5 306V307M501.5 306V307M502.5 306V586M503.5 585V586M504.5 585V586M505.5 310V586M506.5 310V311M507.5 310V311M508.5 310V589M509.5 588V589M510.5 588V589M511.5 313V589M512.5 313V314M513.5 313V314M514.5 313V593M515.5 592V593M516.5 592V593M517.5 317V593M518.5 317V318M519.5 317V318M520.5 317V318M521.5 317V573M522.5 572V573M523.5 572V573M524.5 298V573M525.5 298V299M526.5 298V299M527.5 298V577M528.5 576V577M529.5 576V577M530.5 301V577M531.5 301V302M532.5 301V302M533.5 301V580M534.5 579V580M535.5 579V580M536.5 305V580M537.5 305V306M538.5 305V306M539.5 305V584M540.5 583V584M541.5 583V584M542.5 308V584M543.5 308V309M544.5 308V309M545.5 308V587M546.5 586V587M547.5 586V587M548.5 586V587M549.5 312V587M550.5 312V313M551.5 312V313M552.5 312V568M553.5 567V568M554.5 567V568M555.5 293V568M556.5 293V294M557.5 293V294M558.5 293V571M559.5 570V571M560.5 570V571M561.5 296V571M562.5 296V297M563.5 296V297M564.5 296V575M565.5 574V575M566.5 574V575M567.5 574V575M568.5 300V575M569.5 300V301M570.5 300V301M571.5 300V579M572.5 578V579M573.5 578V579M574.5 303V579M575.5 303V304M576.5 303V304M577.5 303V582M578.5 581V582M579.5 581V582M580.5 581V582M581.5 307V582M582.5 307V308M583.5 307V308M584.5 307V562M585.5 561V562M586.5 561V562M587.5 287V562M588.5 287V288M589.5 287V288M590.5 287V566M591.5 565V566M592.5 565V566M593.5 291V566M594.5 291V292M595.5 291V292M596.5 291V569M597.5 568V569M598.5 568V569M599.5 568V569M600.5 294V569M601.5 294V295M602.5 294V295M603.5 294V573M604.5 572V573M605.5 572V573M606.5 298V573M607.5 298V299M608.5 298V299M609.5 298V577M610.5 576V577M611.5 576V577M612.5 301V577M613.5 301V302M614.5 301V302M615.5 301V557M616.5 556V557M617.5 556V557M618.5 282V557M619.5 282V283M620.5 282V283M621.5 282V561M622.5 560V561M623.5 560V561M624.5 560V561M625.5 286V561M626.5 286V287M627.5 286V287M628.5 286V564M629.5 563V564M630.5 563V564M631.5 289V564M632.5 289V290M633.5 289V290M634.5 289V568M635.5 567V568M636.5 567V568M637.5 293V568M638.5 293V294M639.5 293V294M640.5 293V571M641.5 570V571M642.5 570V571M643.5 296V571M644.5 296V297M645.5 296V297M646.5 296V552M647.5 551V552M648.5 551V552M649.5 551V552M650.5 277V552M651.5 277V278M652.5 277V278M653.5 277V555M654.5 554V555M655.5 554V555M656.5 281V555M657.5 281V282M658.5 281V282M659.5 281V559M660.5 558V559M661.5 558V559M662.5 284V559M663.5 284V285M664.5 284V285M665.5 284V562M666.5 561V562M667.5 561V562M668.5 288V562M669.5 288V289M670.5 288V289M671.5 288V566M672.5 565V566M673.5 565V566M674.5 291V566M675.5 291V292M676.5 291V292M677.5 291V292M678.5 291V546M679.5 545V546M680.5 545V546M681.5 272V546M682.5 272V273M683.5 272V273M684.5 272V550M685.5 549V550M686.5 549V550M687.5 275V550M688.5 275V276M689.5 275V276M690.5 275V554M691.5 553V554M692.5 553V554M693.5 553V554M694.5 279V554M695.5 279V280M696.5 279V280M697.5 279V557M698.5 556V557M699.5 556V557M700.5 282V557M701.5 282V283M702.5 282V283M703.5 282V561M704.5 560V561M705.5 560V561M706.5 560V561M707.5 286V561M708.5 286V287M709.5 286V287M710.5 286V541M711.5 540V541M712.5 540V541M713.5 267V541M714.5 267V268M715.5 267V268M716.5 267V544M717.5 543V544M718.5 543V544M719.5 270V544M720.5 270V271M721.5 270V271M722.5 270V548M723.5 547V548M724.5 547V548M725.5 547V548M726.5 274V548M727.5 274V275M728.5 274V275M729.5 274V552M730.5 551V552M731.5 551V552M732.5 277V552M733.5 277V278M734.5 277V278M735.5 277V555M736.5 554V555M737.5 554V555M738.5 281V555M739.5 281V282M740.5 281V282M741.5 281V536M742.5 535V536M743.5 535V536M744.5 261V536M745.5 261V262M746.5 261V262M747.5 261V262M748.5 261V539M749.5 538V539M750.5 538V539M751.5 265V539M752.5 265V266M753.5 265V266M754.5 265V543M755.5 542V543M756.5 542V543M757.5 268V543M758.5 268V269M759.5 268V269M760.5 268V269M761.5 268V546M762.5 545V546M763.5 545V546M764.5 272V546M765.5 272V273M766.5 272V273M767.5 272V550M768.5 549V550M769.5 549V550M770.5 275V550M771.5 275V276M772.5 275V276M773.5 275V276M774.5 275V530M775.5 529V530M776.5 529V530M777.5 256V530M778.5 256V257M779.5 256V257M780.5 256V534M781.5 533V534M782.5 533V534M783.5 259V534M784.5 259V260M785.5 259V260M786.5 259V537M787.5 536V537M788.5 536V537M789.5 263V537M790.5 263V264M791.5 263V264M792.5 263V541M793.5 540V541M794.5 540V541M795.5 266V541M796.5 266V267M797.5 266V267M798.5 266V544M799.5 543V544M800.5 543V544M801.5 543V544M802.5 270V544M803.5 270V271M804.5 270V271M805.5 270V525M806.5 524V525M807.5 524V525M808.5 251V525M809.5 251V252M810.5 251V252M811.5 251V528M812.5 527V528M813.5 527V528M814.5 254V528M815.5 254V255M816.5 254V255M817.5 254V532M818.5 531V532M819.5 531V532M820.5 258V532M821.5 258V259M822.5 258V259M823.5 258V259M824.5 258V536M825.5 535V536M826.5 535V536M827.5 261V536M828.5 261V262M829.5 261V262M830.5 261V539M831.5 538V539M832.5 538V539M833.5 265V539M834.5 265V266M835.5 265V266M836.5 265V519M837.5 518V519M838.5 518V519M839.5 518V519M840.5 245V519M841.5 245V246M842.5 245V246M843.5 245V523M844.5 522V523M845.5 522V523M846.5 249V523M847.5 249V250M848.5 249V250M849.5 249V527M850.5 526V527M851.5 526V527M852.5 252V527M853.5 252V253M854.5 252V253M855.5 252V530M856.5 529V530M857.5 529V530M858.5 256V530M859.5 256V257M860.5 256V257M861.5 256V534M862.5 533V534M863.5 533V534M864.5 259V534M865.5 259V260M866.5 259V260M867.5 259V260M868.5 259V514M869.5 513V514M870.5 513V514M871.5 240V514M872.5 240V241M873.5 240V241M874.5 240V518M875.5 517V518M876.5 517V518M877.5 244V518M878.5 244V245M879.5 244V245M880.5 244V521M881.5 520V521M882.5 520V521M883.5 247V521M884.5 247V248M885.5 247V248M886.5 247V525M887.5 524V525M888.5 524V525M889.5 251V525M890.5 251V252M891.5 251V252M892.5 251V252M893.5 251V528M894.5 527V528M895.5 527V528M896.5 254V528M897.5 254V255M898.5 254V255M899.5 254V509M900.5 508V509M901.5 508V509M902.5 235V509M903.5 235V236M904.5 235V236M905.5 235V512M906.5 511V512M907.5 511V512M908.5 238V512M909.5 238V239M910.5 238V239M911.5 238V516M912.5 515V516M913.5 515V516M914.5 242V516M915.5 242V243M916.5 242V243M917.5 242V243M918.5 242V520M919.5 519V520M920.5 519V520M921.5 245V520M922.5 245V246M923.5 245V246M924.5 245V523M925.5 522V523M926.5 522V523M927.5 249V523M928.5 249V250M929.5 249V250M930.5 249V503M931.5 502V503M932.5 502V503M933.5 230V503M934.5 230V231M935.5 230V231M936.5 230V507M937.5 506V507M938.5 506V507M939.5 506V507M940.5 233V507M941.5 233V234M942.5 233V234M943.5 233V511M944.5 510V511M945.5 510V511M946.5 237V511M947.5 237V238M948.5 237V238M949.5 237V514M950.5 513V514M951.5 513V514M952.5 240V514M953.5 240V241M954.5 240V241M955.5 240V241M956.5 240V518M957.5 517V518M958.5 517V518M959.5 244V518M960.5 244V245M961.5 244V245M962.5 244V498M963.5 497V498M964.5 497V498M965.5 224V498M966.5 224V225M967.5 224V225M968.5 224V502M969.5 501V502M970.5 501V502M971.5 501V502M972.5 228V502M973.5 228V229M974.5 228V229M975.5 228V505M976.5 504V505M977.5 504V505M978.5 231V505M979.5 231V232M980.5 231V232M981.5 231V509M982.5 508V509M983.5 508V509M984.5 235V509M985.5 235V236M986.5 235V236M987.5 235V512M988.5 511V512M989.5 511V512M990.5 238V512M991.5 238V239M992.5 238V239M993.5 238V493M994.5 492V493M995.5 492V493M996.5 492V493M997.5 241V493M998.5 241V242M999.5 241V242M1000.5 241V496M1001.5 495V496M1002.5 495V496M1003.5 244V496M1004.5 244V245M1005.5 244V245M1006.5 244V500M1007.5 499V500M1008.5 499V500M1009.5 248V500M1010.5 248V249M1011.5 248V249M1012.5 248V503M1013.5 502V503M1014.5 502V503M1015.5 251V503M1016.5 251V252M1017.5 251V252M1018.5 251V507M1019.5 506V507M1020.5 506V507M1021.5 255V507M1022.5 255V256M1023.5 255V256M1024.5 255V256M1025.5 255V487M1026.5 486V487M1027.5 486V487M1028.5 257V487M1029.5 257V258M1030.5 257V258M1031.5 257V491M1032.5 490V491M1033.5 490V491M1034.5 261V491M1035.5 261V262M1036.5 261V262M1037.5 261V495M1038.5 494V495M1039.5 494V495M1040.5 264V495M1041.5 264V265M1042.5 264V265M1043.5 264V498M1044.5 497V498M1045.5 497V498M1046.5 268V498M1047.5 268V269M1048.5 268V269M1049.5 268V502M1050.5 501V502M1051.5 501V502M1052.5 271V502M1053.5 271V272M1054.5 271V272M1055.5 271V482M1056.5 481V482M1057.5 481V482M1058.5 273V482M1059.5 273V274M1060.5 273V274M1061.5 273V486M1062.5 485V486M1063.5 485V486M1064.5 276V486M1065.5 276V277M1066.5 276V277M1067.5 276V489M1068.5 488V489M1069.5 488V489M1070.5 280V489M1071.5 280V281M1072.5 280V281M1073.5 280V493M1074.5 492V493M1075.5 492V493M1076.5 283V493M1077.5 283V284M1078.5 283V284M1079.5 283V497M1080.5 496V497M1081.5 496V497M1082.5 287V497M1083.5 287V288M1084.5 287V288M1085.5 287V477M1086.5 476V477M1087.5 476V477M1088.5 289V477M1089.5 289V290M1090.5 289V290M1091.5 289V481M1092.5 480V481M1093.5 292V481M1094.5 292V293M1095.5 292V293M1096.5 292V484M1097.5 483V484M1098.5 483V484M1099.5 296V484M1100.5 296V297M1101.5 296V488M1102.5 487V488M1103.5 487V488M1104.5 299V488M1105.5 299V300M1106.5 299V300M1107.5 299V492M1108.5 491V492M1109.5 491V492M1110.5 303V492M1111.5 303V304M1112.5 303V472M1113.5 471V472M1114.5 471V472M1115.5 303V472M1116.5 303V304M1117.5 303V304M1118.5 303V476M1119.5 475V476M1120.5 307V476M1121.5 307V308M1122.5 307V308M1123.5 307V480M1124.5 479V480M1125.5 479V480M1126.5 310V480M1127.5 310V311M1128.5 310V311M1129.5 310V483M1130.5 482V483M1131.5 482V483M1132.5 314V483M1133.5 314V315M1134.5 314V487M1135.5 486V487M1136.5 486V487M1137.5 317V487M1138.5 317V318M1139.5 317V318M1140.5 317V467M1141.5 466V467M1142.5 466V467M1143.5 319V467M1144.5 319V320M1145.5 319V471M1146.5 470V471M1147.5 470V471M1148.5 323V471M1149.5 323V324M1150.5 323V324M1151.5 323V474M1152.5 473V474M1153.5 326V474M1154.5 326V327M1155.5 326V327M1156.5 326V478M1157.5 477V478M1158.5 330V478M1159.5 330V331M1160.5 330V331M1161.5 330V482M1162.5 481V482M1163.5 481V482M1164.5 333V482M1165.5 333V334M1166.5 333V462M1167.5 461V462M1168.5 461V462M1169.5 334V462M1170.5 334V335M1171.5 334V335M1172.5 334V466M1173.5 465V466M1174.5 338V466M1175.5 338V339M1176.5 338V339M1177.5 338V469M1178.5 468V469M1179.5 468V469M1180.5 341V469M1181.5 341V342M1182.5 341V473M1183.5 472V473M1184.5 472V473M1185.5 345V473M1186.5 345V346M1187.5 345V477M1188.5 476V477M1189.5 476V477M1190.5 348V477M1191.5 348V349M1192.5 348V349M1193.5 348V457M1194.5 456V457M1195.5 350V457M1196.5 350V351M1197.5 350V351M1198.5 350V461M1199.5 460V461M1200.5 460V461M1201.5 353V461M1202.5 353V354M1203.5 353V354M1204.5 353V464M1205.5 463V464M1206.5 463V464M1207.5 357V464M1208.5 357V358M1209.5 357V358M1210.5 357V468M1211.5 467V468M1212.5 360V468M1213.5 360V361M1214.5 360V361M1215.5 360V472M1216.5 471V472M1217.5 471V472M1218.5 364V472M1219.5 364V365M1220.5 364V365M1221.5 364V452M1222.5 451V452M1223.5 451V452M1224.5 366V452M1225.5 366V367M1226.5 366V455M1227.5 454V455M1228.5 454V455M1229.5 370V455M1230.5 370V371M1231.5 370V371M1232.5 370V459M1233.5 458V459M1234.5 458V459M1235.5 373V459M1236.5 373V374M1237.5 373V374M1238.5 373V463M1239.5 462V463M1240.5 377V463M1241.5 377V378M1242.5 377V378M1243.5 377V466M1244.5 465V466M1245.5 465V466M1246.5 380V466M1247.5 380V381M1248.5 380V381M1249.5 380V447M1250.5 446V447M1251.5 446V447M1252.5 383V447M1253.5 383V384M1254.5 383V450M1255.5 449V450M1256.5 449V450M1257.5 386V450M1258.5 386V387M1259.5 386V387M1260.5 386V454M1261.5 453V454M1262.5 453V454M1263.5 390V454M1264.5 390V391M1265.5 390V391M1266.5 390V457M1267.5 456V457M1268.5 393V457M1269.5 393V394M1270.5 393V394M1271.5 393V461M1272.5 460V461M1273.5 460V461M1274.5 397V461M1275.5 397V398M1276.5 397V398M1277.5 397V441M1278.5 440V441M1279.5 440V441M1280.5 400V441M1281.5 400V401M1282.5 400V445M1283.5 444V445M1284.5 444V445M1285.5 403V445M1286.5 403V404M1287.5 403V404M1288.5 403V448M1289.5 447V448M1290.5 447V448M1291.5 407V448M1292.5 407V408M1293.5 407V408M1294.5 407V452M1295.5 451V452M1296.5 410V452M1297.5 410V411M1298.5 410V411M1299.5 410V456M1300.5 455V456M1301.5 455V456M1302.5 414V456M1303.5 414V415M1304.5 414V415M1305.5 414V436M1306.5 435V436M1307.5 435V436M1308.5 416V436M1309.5 416V417M1310.5 416V439M1311.5 438V439M1312.5 438V439M1313.5 420V439M1314.5 420V421M1315.5 420V421M1316.5 420V443M1317.5 442V443M1318.5 442V443M1319.5 423V443M1320.5 423V424" fill="none" stroke="#3232c8" stroke-width="1" shape-rendering="crispEdges"/><path d="M139.5 389V404M142.5 386V406M145.5 376V406M148.5 373V409M151.5 376V409M154.5 375V413M157.5 376V413M160.5 375V417M163.5 377V416M166.5 377V419M169.5 380V414M172.5 380V422M175.5 361V422M177.5 362V426M180.5 366V426M183.5 364V429M186.5 368V427M189.5 368V432M191.5 371V433M194.5 371V425M197.5 375V431M200.5 375V430M203.5 356V438M206.5 356V441M209.5 359V435M212.5 359V444M215.5 363V432M218.5 363V449M220.5 366V448M223.5 366V430M226.5 370V449M229.5 370V433M232.5 350V451M235.5 350V450M238.5 354V447M241.5 354V458M243.5 357V461M246.5 357V443M249.5 361V455M252.5 361V455M255.5 364V443M258.5 364V467M260.5 345V469M263.5 345V462M266.5 348V448M268.5 348V457M271.5 352V453M273.5 352V448M276.5 355V461M279.5 355V483M281.5 359V470M284.5 359V476M286.5 340V480M289.5 340V472M292.5 343V461M294.5 343V453M297.5 347V479M300.5 347V481M303.5 350V448M305.5 350V459M308.5 354V475M311.5 354V491M313.5 335V497M316.5 335V478M319.5 338V474M322.5 338V505M324.5 342V496M327.5 342V488M330.5 345V463M332.5 345V459M335.5 349V492M338.5 349V499M341.5 330V464M343.5 330V475M346.5 333V502M349.5 333V498M352.5 337V481M355.5 337V520M357.5 340V522M360.5 340V479M363.5 344V503M366.5 344V506M369.5 325V486M372.5 325V520M375.5 328V494M378.5 328V515M381.5 332V503M384.5 332V508M387.5 335V513M390.5 335V499M393.5 339V524M396.5 339V487M399.5 319V537M402.5 319V486M405.5 322V550M409.5 322V551M412.5 326V484M415.5 326V544M418.5 329V501M421.5 329V534M424.5 333V517M427.5 333V520M430.5 313V538M433.5 313V516M436.5 316V549M439.5 316V503M442.5 320V561M445.5 320V487M448.5 323V574M452.5 323V577M455.5 327V483M458.5 327V569M461.5 308V513M464.5 308V558M467.5 311V540M470.5 311V535M473.5 315V567M476.5 315V501M479.5 318V592M483.5 318V585M486.5 322V516M489.5 322V546M492.5 303V542M495.5 303V526M498.5 306V570M502.5 306V583M505.5 310V510M508.5 310V558M511.5 313V548M514.5 313V524M517.5 317V581M521.5 317V569M524.5 298V516M527.5 298V554M530.5 301V535M533.5 301V539M536.5 305V554M539.5 305V518M542.5 308V573M545.5 308V487M549.5 312V496M552.5 312V553M555.5 293V525M558.5 293V537M561.5 296V555M564.5 296V500M568.5 300V513M571.5 300V548M574.5 303V551M577.5 303V508M581.5 307V497M584.5 307V543M587.5 287V537M590.5 287V530M593.5 291V553M596.5 291V510M600.5 294V502M603.5 294V562M606.5 298V523M609.5 298V547M612.5 301V544M615.5 301V516M618.5 282V549M621.5 282V514M625.5 286V512M628.5 286V553M631.5 289V527M634.5 289V541M637.5 293V543M640.5 293V524M643.5 296V562M646.5 296V498M650.5 277V520M653.5 277V547M656.5 281V528M659.5 281V540M662.5 284V538M665.5 284V529M668.5 288V551M671.5 288V514M674.5 291V565M678.5 291V541M681.5 272V527M684.5 272V537M687.5 275V540M690.5 275V520M694.5 279V522M697.5 279V540M700.5 282V542M703.5 282V517M707.5 286V515M710.5 286V529M713.5 267V535M716.5 267V531M719.5 270V541M722.5 270V524M726.5 274V522M729.5 274V545M732.5 277V529M735.5 277V538M738.5 281V538M741.5 281V520M744.5 261V534M748.5 261V538M751.5 265V532M754.5 265V534M757.5 268V539M761.5 268V543M764.5 272V531M767.5 272V532M770.5 275V546M774.5 275V527M777.5 259V529M780.5 258V533M783.5 260V533M786.5 259V535M789.5 263V535M792.5 263V532M795.5 266V539M798.5 266V527M802.5 270V524M805.5 270V524M808.5 254V524M811.5 260V527M814.5 261V527M817.5 256V531M820.5 262V531M824.5 258V535M827.5 261V533M830.5 261V535M833.5 265V535M836.5 266V518M840.5 246V518M843.5 267V522M846.5 254V522M849.5 260V526M852.5 260V526M855.5 257V529M858.5 262V529M861.5 257V533M864.5 260V533M868.5 278V513M871.5 248V513M874.5 263V517M877.5 258V517M880.5 255V520M883.5 264V520M886.5 251V524M889.5 268V524M893.5 265V527M896.5 256V527M899.5 275V508M902.5 254V508M905.5 254V511M908.5 266V511M911.5 245V515M914.5 275V515M918.5 272V519M921.5 251V519M924.5 262V522M927.5 258V522M930.5 265V502M933.5 270V502M936.5 233V506M940.5 239V506M943.5 264V510M946.5 261V510M949.5 246V513M952.5 279V513M956.5 269V517M959.5 256V517M962.5 262V497M965.5 279V497M968.5 228V501M972.5 231V501M975.5 276V504M978.5 246V504M981.5 260V508M984.5 259V508M987.5 249V511M990.5 270V511M993.5 244V492M997.5 241V492M1000.5 288V495M1003.5 256V495M1006.5 273V499M1009.5 269V499M1012.5 263V502M1015.5 279V502M1018.5 256V506M1021.5 286V506M1025.5 301V486M1028.5 266V486M1031.5 292V490M1034.5 269V490M1037.5 290V494M1040.5 271V494M1043.5 288V497M1046.5 273V497M1049.5 286V501M1052.5 275V501M1055.5 302V481M1058.5 280V481M1061.5 299V485M1064.5 284V485M1067.5 296V488M1070.5 287V488M1073.5 294V492M1076.5 289V492M1079.5 292V496M1082.5 291V496M1085.5 304V476M1088.5 299V476M1091.5 310V480M1093.5 309V480M1096.5 300V483M1099.5 299V483M1101.5 297V487M1104.5 303V487M1107.5 301V491M1110.5 303V490M1112.5 308V471M1115.5 310V471M1118.5 315V475M1120.5 318V475M1123.5 308V479M1126.5 312V479M1129.5 310V482M1132.5 314V480M1134.5 314V480M1137.5 317V483M1140.5 322V466M1143.5 322V466M1145.5 320V470M1148.5 323V470M1151.5 323V473M1153.5 326V472M1156.5 326V473M1158.5 330V477M1161.5 330V471M1164.5 333V464M1166.5 333V460M1169.5 334V460M1172.5 334V464M1174.5 338V462M1177.5 338V464M1180.5 341V452M1182.5 341V459M1185.5 345V457M1187.5 345V449M1190.5 348V465M1193.5 348V453M1195.5 350V455M1198.5 350V448M1201.5 353V452M1204.5 353V456M1207.5 357V443M1210.5 357V467M1212.5 360V462M1215.5 360V449M1218.5 364V453M1221.5 364V445M1224.5 366V430M1226.5 366V430M1229.5 370V447M1232.5 370V444M1235.5 373V434M1238.5 373V460M1240.5 377V457M1243.5 377V440M1246.5 380V443M1249.5 380V440M1252.5 383V411M1254.5 383V422M1257.5 386V438M1260.5 386V440M1263.5 390V423M1266.5 390V456M1268.5 393V450M1271.5 393V436M1274.5 397V437M1277.5 397V435M1280.5 400V402M1282.5 400V417M1285.5 403V434M1288.5 403V436M1291.5 407V422M1294.5 407V451M1296.5 410V446M1299.5 410V434M1302.5 414V436M1305.5 414V431M1308.5 416V417M1310.5 416V422M1313.5 420V432M1316.5 420V434M1319.5 423V428" fill="none" stroke="#6464dc" stroke-width="1" shape-rendering="crispEdges"/></svg>
<div style="left:0px;top:657px;width:1360px;height:56px;background:#f7f8fd"></div>
<div style="left:0px;top:713px;width:1360px;height:1px;background:#c8c8c8"></div>
<div style="left:657px;top:685px;width:703px;height:1px;background:#c8c8c8"></div>
<div style="left:0px;top:657px;width:1px;height:56px;background:#cfcfcf"></div>
<div style="left:10px;top:657px;width:1px;height:56px;background:#cfcfcf"></div>
<div style="left:4px;top:662px;width:4px;height:1px;background:#bdbdbd"></div>
<div style="left:4px;top:666px;width:4px;height:1px;background:#bdbdbd"></div>
<div style="left:4px;top:670px;width:4px;height:1px;background:#bdbdbd"></div>
<div style="left:4px;top:674px;width:4px;height:1px;background:#bdbdbd"></div>
<div style="left:4px;top:678px;width:4px;height:1px;background:#bdbdbd"></div>
<div style="left:4px;top:682px;width:4px;height:1px;background:#bdbdbd"></div>
<div style="left:4px;top:686px;width:4px;height:1px;background:#bdbdbd"></div>
<div style="left:4px;top:690px;width:4px;height:1px;background:#bdbdbd"></div>
<div style="left:4px;top:694px;width:4px;height:1px;background:#bdbdbd"></div>
<div style="left:4px;top:698px;width:4px;height:1px;background:#bdbdbd"></div>
<div style="left:4px;top:702px;width:4px;height:1px;background:#bdbdbd"></div>
<div style="left:4px;top:706px;width:4px;height:1px;background:#bdbdbd"></div>
<div style="left:17px;top:660px;width:16px;height:16px;background:#fff;border:1px solid #bdbdbd;border-radius:3px"></div>
<div class="t" style="left:33px;top:661px;font-size:15px;line-height:15px;color:#111;font-weight:normal;">Snap</div>
<div style="left:17px;top:685px;width:132px;height:28px;background:#fafafa;border:1px solid #c4c4c4;border-radius:6px"></div>
<div class="t" style="left:26px;top:691.5px;font-size:14px;line-height:14px;color:#a8a8a8;font-weight:normal;">Secondes</div>
<div style="left:149px;top:685px;width:18px;height:28px;background:#fafafa;border:1px solid #c4c4c4;border-radius:6px"></div>
<svg style="left:0;top:0" width="170" height="713"><path d="M154 697 L158 701 L162 697" stroke="#777" stroke-width="1.3" fill="none"/></svg>
<div style="left:171px;top:657px;width:1px;height:56px;background:#c8c8c8"></div>
<div style="left:172px;top:657px;width:1px;height:56px;background:#cfcfcf"></div>
<div style="left:182px;top:657px;width:1px;height:56px;background:#cfcfcf"></div>
<div style="left:176px;top:662px;width:4px;height:1px;background:#bdbdbd"></div>
<div style="left:176px;top:666px;width:4px;height:1px;background:#bdbdbd"></div>
<div style="left:176px;top:670px;width:4px;height:1px;background:#bdbdbd"></div>
<div style="left:176px;top:674px;width:4px;height:1px;background:#bdbdbd"></div>
<div style="left:176px;top:678px;width:4px;height:1px;background:#bdbdbd"></div>
<div style="left:176px;top:682px;width:4px;height:1px;background:#bdbdbd"></div>
<div style="left:176px;top:686px;width:4px;height:1px;background:#bdbdbd"></div>
<div style="left:176px;top:690px;width:4px;height:1px;background:#bdbdbd"></div>
<div style="left:176px;top:694px;width:4px;height:1px;background:#bdbdbd"></div>
<div style="left:176px;top:698px;width:4px;height:1px;background:#bdbdbd"></div>
<div style="left:176px;top:702px;width:4px;height:1px;background:#bdbdbd"></div>
<div style="left:176px;top:706px;width:4px;height:1px;background:#bdbdbd"></div>
<div style="left:182px;top:657px;width:1px;height:56px;background:#c8c8c8"></div>
<div style="left:184px;top:664px;width:229px;height:42px;background:#b6bac3;border:1px solid #cfcfcf;border-radius:6px"></div>
<div style="left:186px;top:666px;width:46px;height:38px;background:#d3d3d3"></div>
<div style="left:259px;top:666px;width:46px;height:38px;background:#d3d3d3"></div>
<div style="left:339px;top:666px;width:46px;height:38px;background:#d3d3d3"></div>
<div style="left:403px;top:666px;width:1px;height:38px;background:#fff"></div>
<svg style="left:0;top:0" width="420" height="713"><path d="M404 683 H411 L407.5 687.5 Z" fill="#000"/></svg>
<div class="t" style="left:187px;top:674.5px;width:20px;text-align:center;font-size:25px;line-height:26px;color:#0000b4">0</div>
<div class="t" style="left:210px;top:674.5px;width:20px;text-align:center;font-size:25px;line-height:26px;color:#0000b4">0</div>
<div class="t" style="left:234px;top:674.5px;width:20px;text-align:center;font-size:25px;line-height:26px;color:#0000b4">h</div>
<div class="t" style="left:259px;top:674.5px;width:20px;text-align:center;font-size:25px;line-height:26px;color:#0000b4">0</div>
<div class="t" style="left:282px;top:674.5px;width:20px;text-align:center;font-size:25px;line-height:26px;color:#0000b4">0</div>
<div class="t" style="left:312px;top:674.5px;width:20px;text-align:center;font-size:25px;line-height:26px;color:#0000b4">m</div>
<div class="t" style="left:340px;top:674.5px;width:20px;text-align:center;font-size:25px;line-height:26px;color:#0000b4">0</div>
<div class="t" style="left:363px;top:674.5px;width:20px;text-align:center;font-size:25px;line-height:26px;color:#0000b4">0</div>
<div class="t" style="left:386px;top:674.5px;width:20px;text-align:center;font-size:25px;line-height:26px;color:#0000b4">s</div>
<div style="left:419px;top:657px;width:1px;height:56px;background:#c8c8c8"></div>
<div style="left:423px;top:657px;width:1px;height:56px;background:#c8c8c8"></div>
<div style="left:423px;top:657px;width:1px;height:56px;background:#cfcfcf"></div>
<div style="left:433px;top:657px;width:1px;height:56px;background:#cfcfcf"></div>
<div style="left:427px;top:662px;width:4px;height:1px;background:#bdbdbd"></div>
<div style="left:427px;top:666px;width:4px;height:1px;background:#bdbdbd"></div>
<div style="left:427px;top:670px;width:4px;height:1px;background:#bdbdbd"></div>
<div style="left:427px;top:674px;width:4px;height:1px;background:#bdbdbd"></div>
<div style="left:427px;top:678px;width:4px;height:1px;background:#bdbdbd"></div>
<div style="left:427px;top:682px;width:4px;height:1px;background:#bdbdbd"></div>
<div style="left:427px;top:686px;width:4px;height:1px;background:#bdbdbd"></div>
<div style="left:427px;top:690px;width:4px;height:1px;background:#bdbdbd"></div>
<div style="left:427px;top:694px;width:4px;height:1px;background:#bdbdbd"></div>
<div style="left:427px;top:698px;width:4px;height:1px;background:#bdbdbd"></div>
<div style="left:427px;top:702px;width:4px;height:1px;background:#bdbdbd"></div>
<div style="left:427px;top:706px;width:4px;height:1px;background:#bdbdbd"></div>
<div style="left:433px;top:657px;width:1px;height:56px;background:#c8c8c8"></div>
<div class="t" style="left:440px;top:665.5px;font-size:15px;line-height:15px;color:#111;font-weight:normal;">Sélection</div>
<div style="left:483px;top:685px;width:19px;height:19px;background:#ebf1fc;border-right:1px solid #9aa3b8;border-bottom:1px solid #9aa3b8"></div>
<svg style="left:0;top:0" width="520" height="713"><circle cx="491.9" cy="693.9" r="1.6" fill="none" stroke="#000" stroke-width="1.1"/><path d="M496.26 692.14 L498.30 692.30 L498.30 695.50 L496.26 695.66 L495.60 696.79 L496.48 698.65 L493.72 700.24 L492.55 698.55 L491.25 698.55 L490.08 700.24 L487.32 698.65 L488.20 696.79 L487.54 695.66 L485.50 695.50 L485.50 692.30 L487.54 692.14 L488.20 691.01 L487.32 689.15 L490.08 687.56 L491.25 689.25 L492.55 689.25 L493.72 687.56 L496.48 689.15 L495.60 691.01 Z" fill="none" stroke="#000" stroke-width="1.1" stroke-linejoin="round"/></svg>
<div style="left:508px;top:662px;width:144px;height:21px;background:#b6bac3;border:1px solid #cfcfcf;border-radius:5px"></div>
<div style="left:510px;top:664px;width:22px;height:17px;background:#d3d3d3"></div>
<div style="left:541px;top:664px;width:23px;height:17px;background:#d3d3d3"></div>
<div style="left:577px;top:664px;width:22px;height:17px;background:#d3d3d3"></div>
<div style="left:602px;top:664px;width:32px;height:17px;background:#d3d3d3"></div>
<div style="left:643px;top:664px;width:1px;height:17px;background:#fff"></div>
<svg style="left:0;top:0" width="660" height="713"><path d="M643.5 669.5 H650.5 L647 674 Z" fill="#000"/></svg>
<div class="t" style="left:509px;top:667px;width:12px;text-align:center;font-size:11px;line-height:12px;color:#2020c0">0</div>
<div class="t" style="left:520px;top:667px;width:12px;text-align:center;font-size:11px;line-height:12px;color:#2020c0">0</div>
<div class="t" style="left:531px;top:670px;width:12px;text-align:center;font-size:9.5px;line-height:12px;color:#2020c0">h</div>
<div class="t" style="left:541px;top:667px;width:12px;text-align:center;font-size:11px;line-height:12px;color:#2020c0">0</div>
<div class="t" style="left:552px;top:667px;width:12px;text-align:center;font-size:11px;line-height:12px;color:#2020c0">0</div>
<div class="t" style="left:564px;top:670px;width:12px;text-align:center;font-size:9.5px;line-height:12px;color:#2020c0">m</div>
<div class="t" style="left:576px;top:667px;width:12px;text-align:center;font-size:11px;line-height:12px;color:#2020c0">0</div>
<div class="t" style="left:587px;top:667px;width:12px;text-align:center;font-size:11px;line-height:12px;color:#2020c0">0</div>
<div class="t" style="left:594px;top:667px;width:12px;text-align:center;font-size:11px;line-height:12px;color:#2020c0">.</div>
<div class="t" style="left:601px;top:667px;width:12px;text-align:center;font-size:11px;line-height:12px;color:#2020c0">0</div>
<div class="t" style="left:612px;top:667px;width:12px;text-align:center;font-size:11px;line-height:12px;color:#2020c0">0</div>
<div class="t" style="left:623px;top:667px;width:12px;text-align:center;font-size:11px;line-height:12px;color:#2020c0">0</div>
<div class="t" style="left:633px;top:670px;width:12px;text-align:center;font-size:9.5px;line-height:12px;color:#2020c0">s</div>
<div style="left:508px;top:684px;width:144px;height:21px;background:#b6bac3;border:1px solid #cfcfcf;border-radius:5px"></div>
<div style="left:510px;top:686px;width:22px;height:17px;background:#d3d3d3"></div>
<div style="left:541px;top:686px;width:23px;height:17px;background:#d3d3d3"></div>
<div style="left:577px;top:686px;width:22px;height:17px;background:#d3d3d3"></div>
<div style="left:602px;top:686px;width:32px;height:17px;background:#d3d3d3"></div>
<div style="left:643px;top:686px;width:1px;height:17px;background:#fff"></div>
<svg style="left:0;top:0" width="660" height="713"><path d="M643.5 691.5 H650.5 L647 696 Z" fill="#000"/></svg>
<div class="t" style="left:509px;top:689px;width:12px;text-align:center;font-size:11px;line-height:12px;color:#2020c0">0</div>
<div class="t" style="left:520px;top:689px;width:12px;text-align:center;font-size:11px;line-height:12px;color:#2020c0">0</div>
<div class="t" style="left:531px;top:692px;width:12px;text-align:center;font-size:9.5px;line-height:12px;color:#2020c0">h</div>
<div class="t" style="left:541px;top:689px;width:12px;text-align:center;font-size:11px;line-height:12px;color:#2020c0">0</div>
<div class="t" style="left:552px;top:689px;width:12px;text-align:center;font-size:11px;line-height:12px;color:#2020c0">0</div>
<div class="t" style="left:564px;top:692px;width:12px;text-align:center;font-size:9.5px;line-height:12px;color:#2020c0">m</div>
<div class="t" style="left:576px;top:689px;width:12px;text-align:center;font-size:11px;line-height:12px;color:#2020c0">0</div>
<div class="t" style="left:587px;top:689px;width:12px;text-align:center;font-size:11px;line-height:12px;color:#2020c0">0</div>
<div class="t" style="left:594px;top:689px;width:12px;text-align:center;font-size:11px;line-height:12px;color:#2020c0">.</div>
<div class="t" style="left:601px;top:689px;width:12px;text-align:center;font-size:11px;line-height:12px;color:#2020c0">0</div>
<div class="t" style="left:612px;top:689px;width:12px;text-align:center;font-size:11px;line-height:12px;color:#2020c0">0</div>
<div class="t" style="left:623px;top:689px;width:12px;text-align:center;font-size:11px;line-height:12px;color:#2020c0">0</div>
<div class="t" style="left:633px;top:692px;width:12px;text-align:center;font-size:9.5px;line-height:12px;color:#2020c0">s</div>
<div style="left:656px;top:657px;width:1px;height:56px;background:#c8c8c8"></div>
<div style="left:657px;top:657px;width:1px;height:28px;background:#cfcfcf"></div>
<div style="left:667px;top:657px;width:1px;height:28px;background:#cfcfcf"></div>
<div style="left:661px;top:662px;width:4px;height:1px;background:#bdbdbd"></div>
<div style="left:661px;top:666px;width:4px;height:1px;background:#bdbdbd"></div>
<div style="left:661px;top:670px;width:4px;height:1px;background:#bdbdbd"></div>
<div style="left:661px;top:674px;width:4px;height:1px;background:#bdbdbd"></div>
<div style="left:661px;top:678px;width:4px;height:1px;background:#bdbdbd"></div>
<div style="left:669px;top:659px;width:27px;height:26px;background:#ebf1fc;border-right:1px solid #9aa3b8;border-bottom:1px solid #9aa3b8"></div>
<svg style="left:0;top:0" width="700" height="713"><path d="M675 664 L689 671 L675 678 Z" fill="#3e8a5f"/></svg>
<div style="left:701px;top:675px;width:138px;height:2px;background:#a8a8a8"></div>
<div style="left:701px;top:672px;width:1px;height:3px;background:#b0b0b0"></div>
<div style="left:711px;top:672px;width:1px;height:3px;background:#b0b0b0"></div>
<div style="left:721px;top:672px;width:1px;height:3px;background:#b0b0b0"></div>
<div style="left:730px;top:672px;width:1px;height:3px;background:#b0b0b0"></div>
<div style="left:740px;top:672px;width:1px;height:3px;background:#b0b0b0"></div>
<div style="left:750px;top:672px;width:1px;height:3px;background:#b0b0b0"></div>
<div style="left:760px;top:672px;width:1px;height:3px;background:#b0b0b0"></div>
<div style="left:769px;top:672px;width:1px;height:3px;background:#b0b0b0"></div>
<div style="left:779px;top:672px;width:1px;height:3px;background:#b0b0b0"></div>
<div style="left:789px;top:672px;width:1px;height:3px;background:#b0b0b0"></div>
<div style="left:799px;top:672px;width:1px;height:3px;background:#b0b0b0"></div>
<div style="left:809px;top:672px;width:1px;height:3px;background:#b0b0b0"></div>
<div style="left:818px;top:672px;width:1px;height:3px;background:#b0b0b0"></div>
<div style="left:828px;top:672px;width:1px;height:3px;background:#b0b0b0"></div>
<div style="left:838px;top:672px;width:1px;height:3px;background:#b0b0b0"></div>
<div class="t" style="left:702px;top:660px;font-size:10px;line-height:10px;color:#111;font-weight:normal;">−</div>
<div class="t" style="left:831px;top:660px;font-size:11px;line-height:11px;color:#111;font-weight:normal;">+</div>
<div style="left:742px;top:666px;width:10px;height:18px;background:#f6f8fc;border:1px solid #333;border-radius:2px"></div>
<div style="left:746px;top:672px;width:2px;height:6px;background:#666"></div>
<div style="left:845px;top:657px;width:1px;height:28px;background:#c8c8c8"></div>
<div style="left:848px;top:657px;width:1px;height:28px;background:#c8c8c8"></div>
<div style="left:0px;top:714px;width:1360px;height:22px;background:#fafafa"></div>
<div class="t" style="left:5px;top:718px;font-size:16px;line-height:16px;color:#3c3c3c;font-weight:normal;">Arrêté.</div>
<div class="t" style="left:266px;top:718px;font-size:15px;line-height:15px;color:#3a3a3a;font-weight:normal;">Cliquer et glisser pour sélectionner l’audio</div>
</body></html>
